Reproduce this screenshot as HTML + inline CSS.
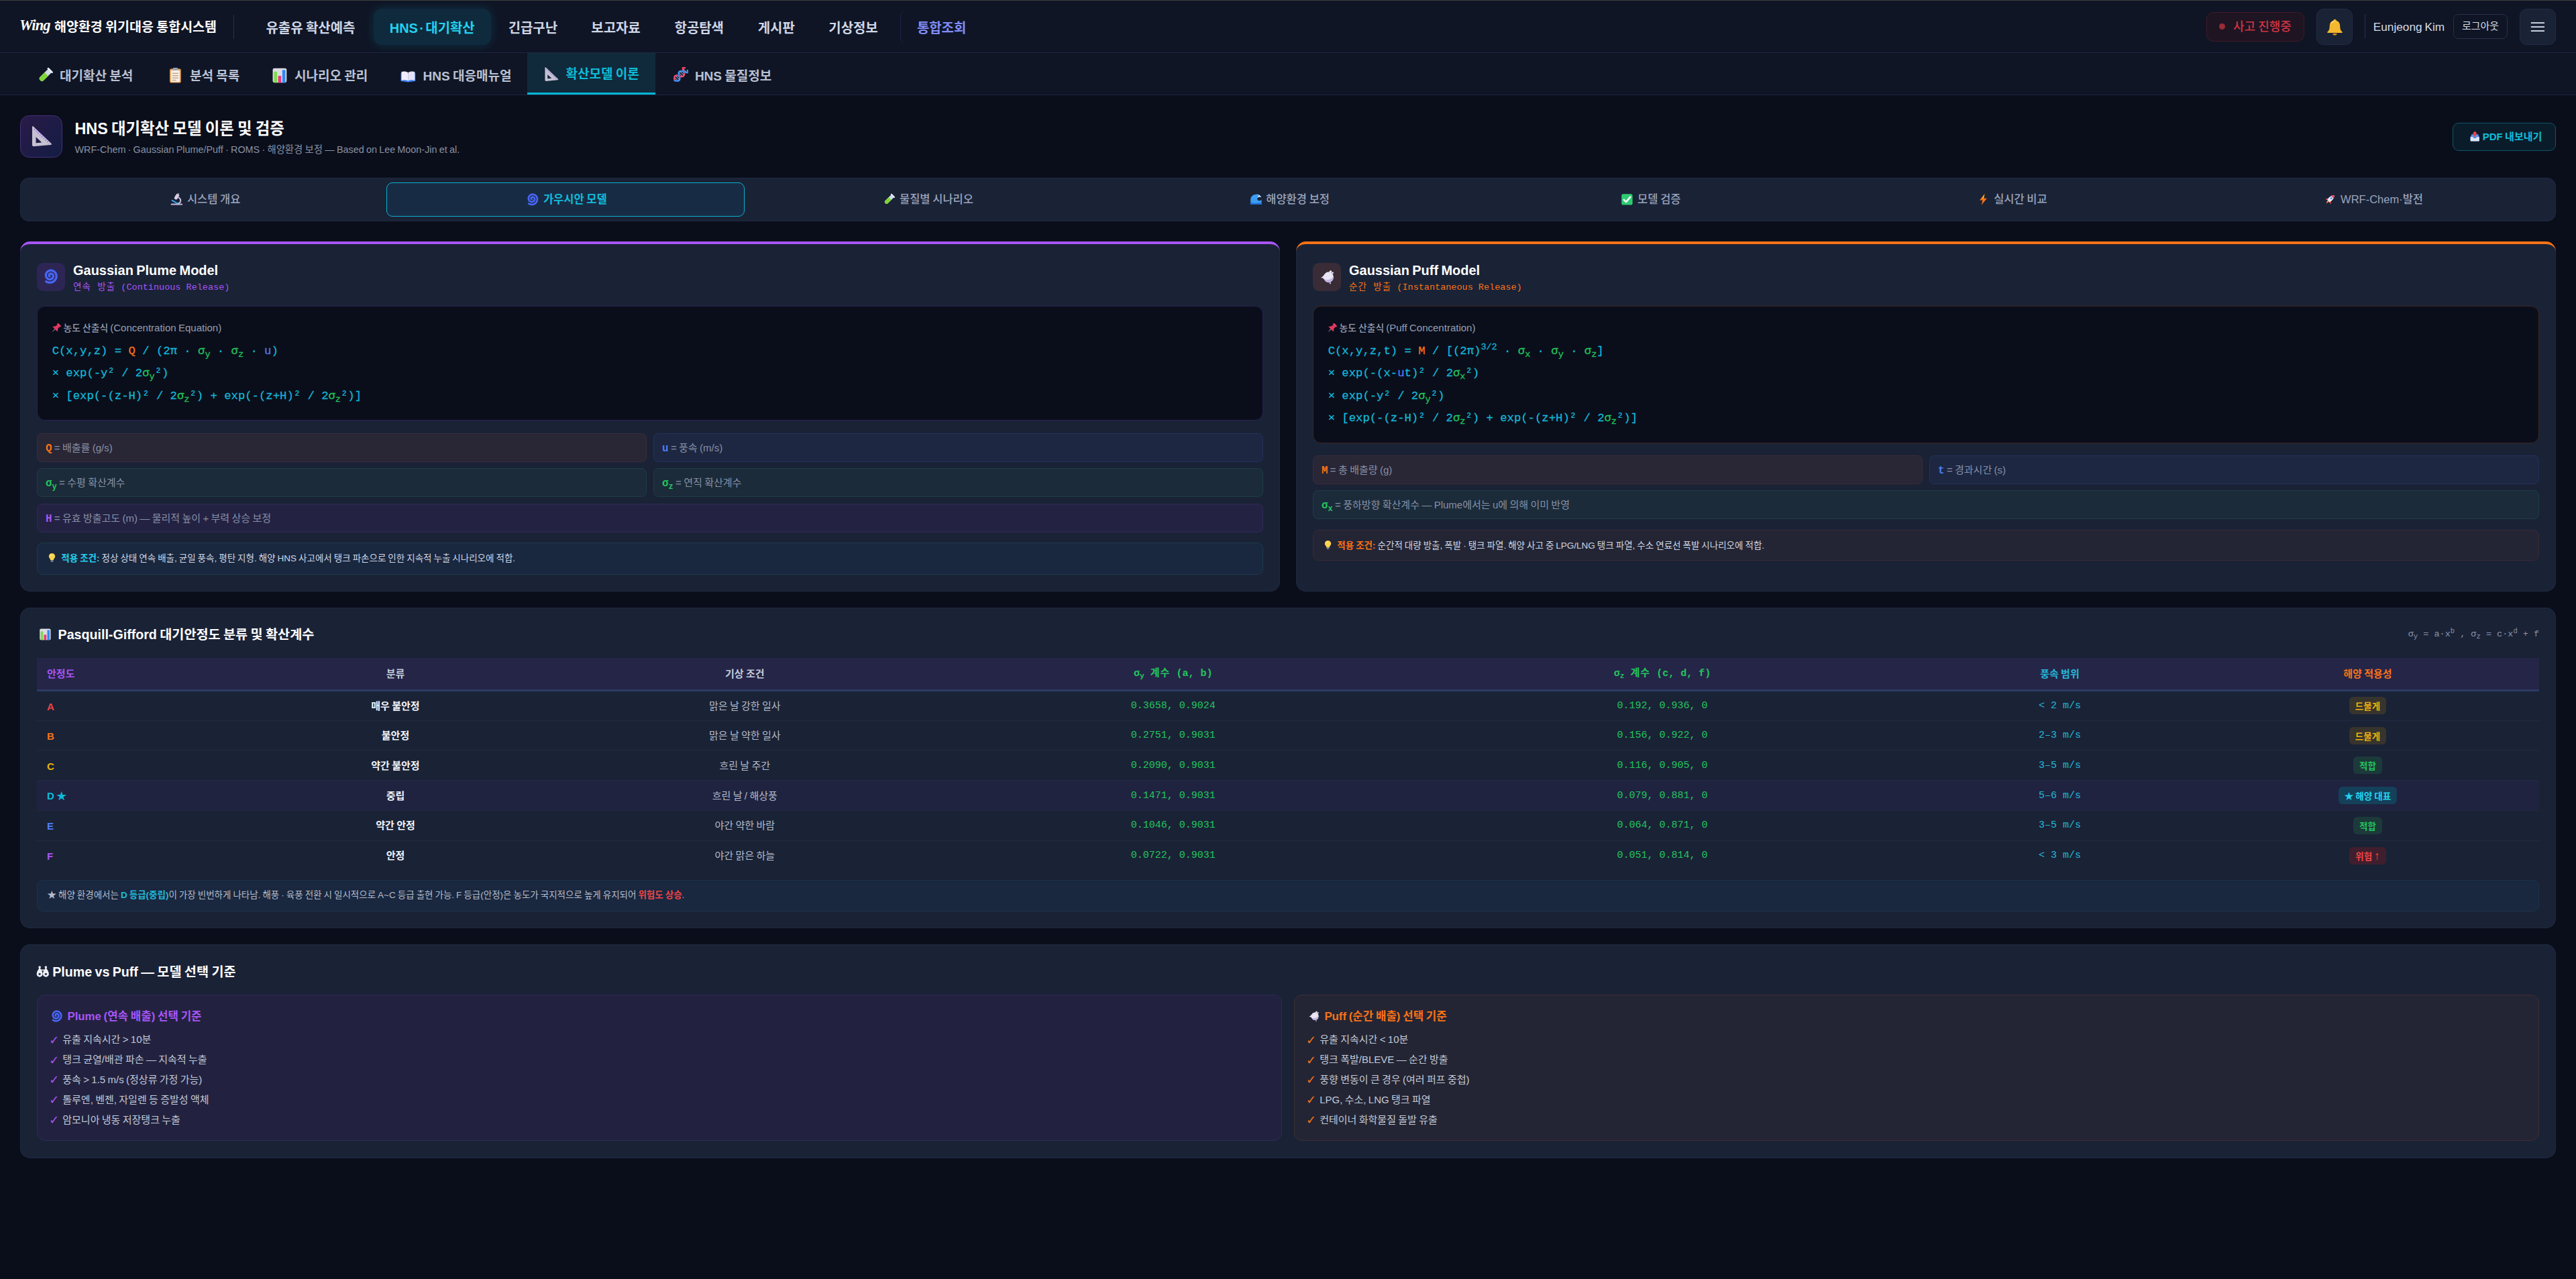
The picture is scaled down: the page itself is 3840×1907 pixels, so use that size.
<!DOCTYPE html>
<html lang="ko">
<head>
<meta charset="utf-8">
<title>HNS 대기확산 모델 이론 및 검증</title>
<style>
*{box-sizing:border-box;margin:0;padding:0}
html{background:#0a0e1a}
body{width:3840px;height:1907px;overflow:hidden;background:#0a0e1a;color:#e5e9f2;
  font-family:"Liberation Sans","Noto Sans CJK KR",sans-serif;font-size:19.5px;line-height:1.4;position:relative}
body *{word-spacing:-0.054em}
.mono,.mono *{font-family:"Liberation Mono","Noto Sans CJK KR",monospace;word-spacing:0}
svg.ic{display:inline-block;vertical-align:middle;flex:none}
.cicon svg.ic,.picon svg.ic,.sqbtn svg.ic{display:block}
.abs{position:absolute;white-space:nowrap}
.kw{letter-spacing:1.08px}
.lat{font-size:15px}
/* ---------- top bar ---------- */
.topbar{position:absolute;left:0;top:0;width:3840px;height:79.005px;background:#0f1525;border-bottom:1.5px solid #1c2741}
.topline{position:absolute;left:0;top:0;width:3840px;height:1.005px;background:#403f3d;z-index:5}
.logo{left:29.1px;top:19.95px;height:36px;line-height:36px;font-family:"Liberation Serif",serif;font-style:italic;font-weight:700;font-size:22.5px;color:#fff;letter-spacing:-0.9px}
.brand{left:81px;top:21px;height:36px;line-height:38.7px;font-size:19.5px;font-weight:700;color:#fff}
.vdiv{position:absolute;width:1.005px;background:#27324d}
.nav{top:13.005px;height:54px;line-height:59.1px;font-size:19.95px;font-weight:700;color:#cfd7e7;text-align:center}
.nav.on{background:#0f2a3d;border-radius:12px;color:#22d3ee;box-shadow:0 0 15px rgba(6,182,212,.18)}
.nav.all{color:#818cf8;font-weight:700;border-left:1.5px solid #1f2649;border-radius:12px}
.pill-alert{left:3289.05px;top:18px;width:145.5px;height:43.5px;border:1.5px solid #421a27;background:#1f1422;border-radius:10.5px;color:#cf3542;font-size:18px;line-height:42px;font-weight:500}
.pill-alert i{position:absolute;left:18px;top:15.75px;width:9px;height:9px;border-radius:50%;background:#9a2c37}
.pill-alert span{position:absolute;left:39px;top:0}
.sqbtn{width:54px;height:54px;top:13.005px;border-radius:10.5px;background:#1a2236;border:1.5px solid #222c45}
.uname{left:3537.75px;top:21.9px;line-height:36px;font-size:17.25px;color:#d5dbe8}
.logout{left:3657px;top:21px;width:81px;height:36.75px;border:1.5px solid #27324d;border-radius:7.5px;font-size:15px;line-height:33.75px;text-align:center;color:#d5dbe8}
/* ---------- sub nav ---------- */
.subnav{position:absolute;left:0;top:79.005px;width:3840px;height:63px;background:#0f1525;border-bottom:1.5px solid #1c2741}
.stab{position:absolute;top:0;height:61.995px;line-height:70.05px;font-size:19.05px;font-weight:700;color:#b9c1d3;white-space:nowrap}
.stab .ic{position:absolute;top:21.3px}
.stab.on{background:#10293b;border-bottom:3px solid #06b6d4;color:#0cbdd8;height:61.995px;line-height:64.05px}
.stab.on .ic{top:19.2px}
/* ---------- page header ---------- */
.picon{left:30px;top:172.05px;width:63px;height:63px;border-radius:13.5px;background:linear-gradient(135deg,#2a1a48,#131d44);border:1.5px solid #46307a}
.ptitle{left:111.45px;top:173.1px;font-size:23.4px;line-height:39px;font-weight:700;color:#fff}
.psub{left:111.45px;top:211.5px;font-size:14.4px;line-height:22.5px;color:#8791a6}
.pdf{left:3655.95px;top:183px;width:154.05px;height:42px;border:1.5px solid #0e5566;background:#0a1c2a;border-radius:9px;color:#10bfdc;font-size:15px;font-weight:700;line-height:39px}
/* ---------- tab bar ---------- */
.tabbar{position:absolute;left:30px;top:265.005px;width:3780px;height:64.995px;background:#1a2236;border-radius:13.5px;box-shadow:inset 0 0 0 1.005px #1e2a43}
.tab{position:absolute;top:7.005px;height:51px;width:534.15px;text-align:center;font-size:16.5px;font-weight:500;line-height:50.1px;padding-left:4.5px;color:#9aa5bc;white-space:nowrap;border-radius:9px}
.tab.on{background:#182b44;border:1.5px solid #0bb0d0;color:#10bcd8;line-height:48px;font-weight:700}
.tab .ic{margin-right:6px;position:relative;top:-1.5px}
/* ---------- cards ---------- */
.card{position:absolute;background:#1a2236;border-radius:15px;box-shadow:inset 1.005px 0 0 #1e2a43,inset -1.005px 0 0 #1e2a43,inset 0 -1.005px 0 #1e2a43}
.card.tbl,.card.cmp{box-shadow:inset 0 0 0 1.005px #1e2a43}
.card.plume{left:30px;top:359.7px;width:1878px;height:522px;border-top:4.5px solid #a855f7}
.card.puff{left:1932px;top:359.7px;width:1878px;height:522px;border-top:4.5px solid #f97316}
.cicon{left:25.2px;top:27.9px;width:42px;height:42px;border-radius:9px}
.ctitle{left:79.05px;top:24.75px;font-size:19.95px;line-height:30px;font-weight:700;color:#fff}
.csub{left:79.05px;top:54px;font-size:13.5px;line-height:21px}
.eq{position:absolute;left:25.05px;top:92.25px;width:1827.9px;background:#0a0e1a;border-radius:12px;padding:20.25px 22.5px 0 21.6px}
.eq .lab{margin-left:-2.4px;font-size:13.8px;line-height:24px;color:#949eb4;font-weight:500;white-space:nowrap;height:30px}
.eq .ln{font-size:17.25px;line-height:33.3px;height:33.3px;color:#12b8dc;white-space:pre;-webkit-text-stroke:0.27px currentColor}
.eq .ln sub{font-size:13.5px;line-height:0;vertical-align:-3.9px}
.eq .ln sup{font-size:13.5px;line-height:0;vertical-align:6.9px}
.o{color:#f97316}.g{color:#22c55e}.b{color:#4f7df5}.p{color:#a855f7}.c{color:#12b8dc}
.var{position:absolute;height:42.9px;border-radius:7.5px;font-size:15px;line-height:42px;padding-left:12px;color:#8791a6;white-space:nowrap;border:1.5px solid}
.var b{font-family:"Liberation Mono",monospace;font-weight:700;font-size:15.75px;word-spacing:0}
.var sub{font-size:12px;line-height:0;vertical-align:-3.6px}
.var.vo{background:#292636;border-color:#3b2d38}
.var.vb{background:#1d2742;border-color:#24325a}
.var.vg{background:#1b2b3a;border-color:#1f3d44}
.var.vp{background:#242243;border-color:#2f2a58}
.cond{position:absolute;left:25.05px;width:1827.9px;height:48px;border-radius:9px;font-size:13.5px;line-height:45px;padding-left:14.25px;color:#cfd6e3;white-space:nowrap;border:1.5px solid}
.cond b{font-weight:700}
.cond .ic{position:relative;top:-1.5px;margin-right:3px}
.cond.cc{background:#19273f;border-color:#1d3a4c}
.cond.co{background:#232534;border-color:#3a2b33}
/* ---------- table card ---------- */
.card.tbl{left:30px;top:906px;width:3780px;height:477.6px}
.card.cmp{left:30px;top:1408.2px;width:3780px;height:318.6px}
.h2{font-size:19.65px;line-height:30px;font-weight:700;color:#fff}
.formula{right:24.9px;top:25.5px;font-size:13.5px;line-height:27px;color:#8a93a7}
.formula sub{font-size:10.5px;line-height:0;vertical-align:-3px}.formula sup{font-size:10.5px;line-height:0;vertical-align:5.1px}
table{position:absolute;left:25.05px;top:75.3px;width:3730.05px;border-collapse:collapse;table-layout:fixed}
th{height:48.3px;background:#252548;font-size:15px;font-weight:700;text-align:center;border-bottom:3px solid #2b3c63;padding:0;white-space:nowrap}
td{height:44.7px;font-size:15px;text-align:center;border-bottom:1.5px solid #212a41;padding:0;white-space:nowrap;color:#b4bccb}
tr:last-child td{border-bottom:none}
th:first-child,td:first-child{text-align:left;padding-left:15px}
td.k{font-weight:700;font-size:15px;padding-top:1.8px}
td.n{font-weight:700;color:#f1f4f9}
td.m{font-family:"Liberation Mono",monospace;font-size:15px;word-spacing:0;color:#22c55e}
td.w{font-family:"Liberation Mono",monospace;font-size:15px;word-spacing:0;color:#22b8d8}
tr.hl td{background:#1f2340}
th sub{font-size:11.25px;line-height:0;vertical-align:-3px}
.badge{display:inline-block;height:26.1px;line-height:30.3px;padding:0 9px;border-radius:6px;font-size:13.5px;font-weight:700;vertical-align:middle}
.bd-y{background:#37342e;color:#efb10d}.bd-g{background:#1c3a3a;color:#22c55e}.bd-c{background:#14405a;color:#22d3ee}.bd-r{background:#3f1f2e;color:#ef4444}
.note{position:absolute;left:25.05px;top:405.6px;width:3730.05px;height:47.4px;border-radius:9px;background:#19273f;border:1.5px solid #1d3448;font-size:13.5px;line-height:44.4px;padding-left:14.4px;color:#b4bccb;white-space:nowrap}
/* ---------- compare card ---------- */
.cbox{position:absolute;top:75.3px;width:1855.95px;height:217.95px;border-radius:12px;border:1.5px solid}
.cbox.l{left:25.05px;background:#222240;border-color:#2d2a57}
.cbox.r{left:1899px;background:#242534;border-color:#3f2e33}
.cbox h3{position:absolute;left:20.4px;top:17.1px;font-size:16.8px;line-height:27px;font-weight:700;white-space:nowrap}
.cbox h3 .ic{margin-right:6px;position:relative;top:-1.5px}
.cbox ul{position:absolute;left:18.6px;top:51px;list-style:none}
.cbox li{height:29.895px;line-height:29.895px;font-size:15px;color:#c3cad8;white-space:nowrap}
.cbox li i{font-style:normal;font-family:"DejaVu Sans",sans-serif;font-size:18px;line-height:15px;display:inline-block;width:18.6px;position:relative;left:-1.5px;top:1.2px}
</style>
</head>
<body>
<div class="topbar"><div class="abs logo">Wing</div><div class="abs brand">해양환경 위기대응 통합시스템</div><div class="vdiv" style="left:348.45px;top:22.005px;height:36px"></div><div class="abs nav " style="left:372.45px;width:181.05px">유출유 확산예측</div><div class="abs nav on" style="left:556.95px;width:174.6px">HNS<span style="margin:0 2.4px">·</span>대기확산</div><div class="abs nav " style="left:733.05px;width:122.55px">긴급구난</div><div class="abs nav " style="left:856.5px;width:123px">보고자료</div><div class="abs nav " style="left:980.55px;width:123.45px">항공탐색</div><div class="abs nav " style="left:1105.05px;width:104.4px">게시판</div><div class="abs nav " style="left:1210.5px;width:123px">기상정보</div><div class="abs nav all" style="left:1341.6px;width:123px">통합조회</div><div class="abs pill-alert"><i></i><span>사고 진행중</span></div><div class="abs sqbtn" style="left:3453px"><div style="position:absolute;left:12.75px;top:13.05px"><svg class="ic" width="27" height="27" viewBox="0 0 16 16"><path d="M8 1 C8.8 1 9.3 1.5 9.3 2.2 C11.6 2.8 12.6 4.8 12.6 7.2 C12.6 10 13.4 11.2 14.6 12.2 V13 H1.4 V12.2 C2.6 11.2 3.4 10 3.4 7.2 C3.4 4.8 4.4 2.8 6.7 2.2 C6.7 1.5 7.2 1 8 1Z" fill="#f5b82e"/><path d="M6.2 13.6 a1.8 1.6 0 0 0 3.6 0Z" fill="#e08a1a"/><path d="M5 4.4 C5.6 3.4 6.6 3 7.4 3" stroke="#fde08a" stroke-width="0.9" fill="none" stroke-linecap="round"/></svg></div></div><div class="vdiv" style="left:3525px;top:21px;height:36px"></div><div class="abs uname">Eunjeong Kim</div><div class="abs logout">로그아웃</div><div class="abs sqbtn" style="left:3756px"><svg width="51" height="51" viewBox="0 0 34 34" style="position:absolute;left:0;top:0"><path d="M10.6 13.4h13.4M10.6 17.4h13.4M10.6 21.4h13.4" stroke="#dfe5f0" stroke-width="1.3"/></svg></div></div><div class="topline"></div>
<div class="subnav"><div class="stab " style="left:31.5px;width:192px"><svg class="ic" width="24.75" height="24.75" viewBox="0 0 16 16" style="left:23.1px"><g transform="rotate(45 8 8)"><rect x="5.6" y="0.8" width="4.8" height="14" rx="2.4" fill="#cfd8e6"/><rect x="5.6" y="6.5" width="4.8" height="8.3" rx="2.4" fill="#7fd43a"/><rect x="5.6" y="6.5" width="4.8" height="2.4" fill="#7fd43a"/><rect x="4.6" y="0.4" width="6.8" height="1.8" rx="0.9" fill="#e8eef7"/></g></svg><span style="position:absolute;left:57.45px">대기확산 분석</span></div><div class="stab " style="left:225.45px;width:156px"><svg class="ic" width="24.75" height="24.75" viewBox="0 0 16 16" style="left:23.1px"><rect x="2.6" y="1.6" width="10.8" height="13.6" rx="1.4" fill="#e8a25c"/><rect x="3.8" y="3.2" width="8.4" height="11" rx="0.6" fill="#f4f1ec"/><rect x="5.6" y="0.6" width="4.8" height="2.6" rx="0.9" fill="#9aa3b5"/><rect x="5" y="5.6" width="6" height="0.9" fill="#c9a27a"/><rect x="5" y="7.8" width="6" height="0.9" fill="#c9a27a"/><rect x="5" y="10" width="6" height="0.9" fill="#c9a27a"/><rect x="5" y="12.2" width="4" height="0.9" fill="#c9a27a"/></svg><span style="position:absolute;left:57.45px">분석 목록</span></div><div class="stab " style="left:381.45px;width:191.55px"><svg class="ic" width="24.75" height="24.75" viewBox="0 0 16 16" style="left:23.1px"><rect x="1" y="1.2" width="13.4" height="13.8" rx="1.6" fill="#dcdbe4"/><rect x="2.2" y="4.4" width="3" height="10.6" rx="0.6" fill="#7ddc4c"/><rect x="6.2" y="8.4" width="3" height="6.6" rx="0.6" fill="#ec3a7a"/><rect x="10.2" y="2.8" width="3" height="12.2" rx="0.6" fill="#2f8af5"/></svg><span style="position:absolute;left:57.45px">시나리오 관리</span></div><div class="stab " style="left:573px;width:213px"><svg class="ic" width="24.75" height="24.75" viewBox="0 0 16 16" style="left:23.1px"><path d="M1 5.6 L8 6.4 L15 5.6 V13.6 L8 14.6 L1 13.6Z" fill="#3b82f6"/><path d="M1.6 4.6 C3.8 4 6.4 4.2 8 5.4 V13.4 C6.4 12.4 3.8 12.2 1.6 12.8Z" fill="#f1ecfa"/><path d="M14.4 4.6 C12.2 4 9.6 4.2 8 5.4 V13.4 C9.6 12.4 12.2 12.2 14.4 12.8Z" fill="#e6e0f3"/></svg><span style="position:absolute;left:57.45px">HNS 대응매뉴얼</span></div><div class="stab on" style="left:786px;width:190.5px"><svg class="ic" width="24.75" height="24.75" viewBox="0 0 16 16" style="left:23.1px"><path d="M2.2 2.2 Q2.2 0.8 3.2 1.8 L14.8 12.8 Q15.6 13.7 14.4 13.8 L3.2 14.8 Q2.2 14.8 2.2 13.8Z" fill="#c6c1d2"/><path d="M4.7 8.6 L4.7 12.5 L8.6 12.2Z" fill="#10293b"/><path d="M3.6 3.4 L13.6 12.9" stroke="#9b6cf0" stroke-width="1.1" stroke-dasharray="0.55 1.15"/></svg><span style="position:absolute;left:57.45px">확산모델 이론</span></div><div class="stab " style="left:978.45px;width:198px"><svg class="ic" width="24.75" height="24.75" viewBox="0 0 16 16" style="left:23.1px"><g transform="translate(1.1 0.6) scale(0.86) rotate(-45 8 8)" fill="none" stroke-linecap="round"><path d="M-1 8 C1.5 3.5 4 3.5 6 8 S11 12.5 13 8 S16 3.5 17 6" stroke="#ef4468" stroke-width="1.9"/><path d="M-1 8 C1.5 12.5 4 12.5 6 8 S11 3.5 13 8 S16 12.5 17 10" stroke="#3b8ef0" stroke-width="1.9"/><path d="M1.4 6.2v3.6M3.4 5.4v5.2M8.4 6v4M10.4 5.4v5.2M14.8 6v4" stroke="#c9d4ea" stroke-width="0.7"/></g></svg><span style="position:absolute;left:57.45px">HNS 물질정보</span></div></div>
<div class="abs picon"><div style="position:absolute;left:12px;top:11.7px"><svg class="ic" width="36" height="36" viewBox="0 0 16 16"><path d="M2.2 2.2 Q2.2 0.8 3.2 1.8 L14.8 12.8 Q15.6 13.7 14.4 13.8 L3.2 14.8 Q2.2 14.8 2.2 13.8Z" fill="#c6c1d2"/><path d="M4.7 8.6 L4.7 12.5 L8.6 12.2Z" fill="#1f1c46"/><path d="M3.6 3.4 L13.6 12.9" stroke="#9b6cf0" stroke-width="1.1" stroke-dasharray="0.55 1.15"/></svg></div></div><div class="abs ptitle">HNS 대기확산 모델 이론 및 검증</div><div class="abs psub">WRF-Chem · Gaussian Plume/Puff · ROMS · 해양환경 보정 — Based on Lee Moon-Jin et al.</div><div class="abs pdf"><span style="position:absolute;left:24px;top:0"><svg class="ic" width="16.5" height="16.5" viewBox="0 0 16 16" style="position:relative;top:-1.5px"><path d="M1.6 9 L3.4 5 H12.6 L14.4 9 V14 A1 1 0 0 1 13.4 15 H2.6 A1 1 0 0 1 1.6 14Z" fill="#5b8def"/><path d="M1.6 9 H5.4 L6.2 10.8 H9.8 L10.6 9 H14.4 V14 A1 1 0 0 1 13.4 15 H2.6 A1 1 0 0 1 1.6 14Z" fill="#dfe7f5"/><path d="M8 0.6 L11.6 4.4 H9.4 V8.6 H6.6 V4.4 H4.4Z" fill="#ef4444"/></svg></span><span style="position:absolute;left:43.8px;top:0">PDF 내보내기</span></div>
<div class="tabbar"><div class="tab " style="left:7.005px"><svg class="ic" width="18.75" height="18.75" viewBox="0 0 16 16"><rect x="0.6" y="13.2" width="14.8" height="2" rx="0.8" fill="#b8a8c8"/><path d="M8.2 13.2 C13.4 13.2 14.6 8.2 10.6 5.6" stroke="#c9c2d4" stroke-width="1.7" fill="none" stroke-linecap="round"/><g transform="rotate(32 8 4.6)"><rect x="5.9" y="0.6" width="4.2" height="6.6" rx="1.6" fill="#d3ccdc"/><rect x="6.2" y="5" width="3.6" height="3.2" rx="1" fill="#e6cdf2"/><rect x="7.2" y="-0.6" width="1.6" height="1.6" fill="#9d97a8"/></g><path d="M2.2 9.2 L8.4 12.8" stroke="#35a8f5" stroke-width="1.7" stroke-linecap="round"/></svg>시스템 개요</div><div class="tab on" style="left:545.655px"><svg class="ic" width="18.75" height="18.75" viewBox="0 0 16 16"><path d="M6.51 7.79 L6.37 7.74 L6.23 7.66 L6.10 7.56 L5.98 7.43 L5.88 7.27 L5.80 7.09 L5.75 6.90 L5.73 6.68 L5.74 6.46 L5.79 6.23 L5.87 6.00 L5.99 5.78 L6.15 5.57 L6.35 5.38 L6.58 5.21 L6.84 5.08 L7.12 4.98 L7.43 4.92 L7.75 4.91 L8.08 4.95 L8.42 5.03 L8.74 5.17 L9.05 5.36 L9.34 5.59 L9.60 5.87 L9.83 6.20 L10.00 6.56 L10.13 6.95 L10.21 7.37 L10.22 7.80 L10.17 8.24 L10.06 8.68 L9.88 9.11 L9.64 9.52 L9.34 9.90 L8.98 10.24 L8.56 10.53 L8.10 10.76 L7.61 10.93 L7.08 11.03 L6.54 11.06 L5.98 11.01 L5.43 10.88 L4.90 10.67 L4.38 10.39 L3.91 10.03 L3.48 9.60 L3.12 9.10 L2.81 8.55 L2.59 7.95 L2.45 7.32 L2.39 6.67 L2.43 6.00 L2.57 5.34 L2.80 4.69 L3.12 4.07 L3.53 3.49 L4.02 2.96 L4.59 2.51 L5.22 2.13 L5.91 1.84 L6.65 1.65 L7.41 1.56 L8.19 1.57 L8.97 1.70 L9.74 1.93 L10.47 2.28 L11.16 2.72 L11.79 3.27 L12.34 3.91 L12.81 4.62 L13.17 5.40 L13.43 6.23 L13.57 7.11 L13.59 8.00 L13.48 8.89 L13.25 9.78 L12.90 10.63 L12.42 11.43 L11.83 12.17 L11.14 12.83 L10.36 13.39 L9.49 13.84 L8.57 14.18 L7.59 14.38 L6.59 14.44 L5.58 14.37 L4.57 14.16 L3.60 13.80 L2.67 13.31" stroke="#4866f6" stroke-width="2.3" fill="none" stroke-linecap="round" stroke-linejoin="round"/></svg>가우시안 모델</div><div class="tab " style="left:1084.305px"><svg class="ic" width="18.75" height="18.75" viewBox="0 0 16 16"><g transform="rotate(45 8 8)"><rect x="5.6" y="0.8" width="4.8" height="14" rx="2.4" fill="#cfd8e6"/><rect x="5.6" y="6.5" width="4.8" height="8.3" rx="2.4" fill="#7fd43a"/><rect x="5.6" y="6.5" width="4.8" height="2.4" fill="#7fd43a"/><rect x="4.6" y="0.4" width="6.8" height="1.8" rx="0.9" fill="#e8eef7"/></g></svg>물질별 시나리오</div><div class="tab " style="left:1622.955px"><svg class="ic" width="18.75" height="18.75" viewBox="0 0 16 16"><path d="M1 14.6 V8.2 C1 4 4.4 1.4 8.4 1.4 C11.6 1.4 13.8 3 14.6 5.2 C13 4.2 10.6 4.4 9.8 6.2 C9 8.2 10.6 10 12.6 9.6 C13.6 9.4 14.4 8.8 15 8 V14.6Z" fill="#3b9cf2"/><path d="M8.4 1.4 C11.6 1.4 13.8 3 14.6 5.2 C13 4.2 10.6 4.4 9.8 6.2 C10 4 11.4 3.2 12.4 3 C11.2 2.2 9.8 1.6 8.4 1.4Z" fill="#e6f2ff"/><path d="M1 12.4 C4 11.4 6 13.6 9 12.6 C11.4 11.8 13 12.8 15 12.2 V14.6 H1Z" fill="#1f6fd6"/></svg>해양환경 보정</div><div class="tab " style="left:2161.605px"><svg class="ic" width="18.75" height="18.75" viewBox="0 0 16 16"><rect x="1" y="1" width="14" height="14" rx="2.2" fill="#2ecc71"/><path d="M4 8.4 L6.8 11.2 L12.2 4.8" stroke="#fff" stroke-width="2" fill="none" stroke-linecap="round" stroke-linejoin="round"/></svg>모델 검증</div><div class="tab " style="left:2700.255px"><svg class="ic" width="18.75" height="18.75" viewBox="0 0 16 16"><path d="M9.8 0.8 L3.4 9 H7.2 L5.8 15.2 L12.6 6.6 H8.6Z" fill="#f97316"/><path d="M9.8 0.8 L6.4 6.8 L8.6 6.6Z" fill="#fbbf24"/></svg>실시간 비교</div><div class="tab " style="left:3238.905px"><svg class="ic" width="18.75" height="18.75" viewBox="0 0 16 16"><g transform="rotate(45 8 8)"><path d="M8 0.4 C10.6 2.6 11 6.6 10.4 11 H5.6 C5 6.6 5.4 2.6 8 0.4Z" fill="#e8ecf5"/><path d="M8 0.4 C9.2 1.4 9.9 2.6 10.3 4 H5.7 C6.1 2.6 6.8 1.4 8 0.4Z" fill="#ef4468"/><circle cx="8" cy="6" r="1.3" fill="#4f8ef7"/><path d="M5.6 8 L3.2 12 L5.7 11.2Z M10.4 8 L12.8 12 L10.3 11.2Z" fill="#ef4468"/><path d="M6.6 11 H9.4 L8 15.2Z" fill="#fb923c"/></g></svg>WRF-Chem·발전</div></div>
<div class="card plume"><div class="abs cicon" style="background:#2d2655"><div style="position:absolute;left:9.75px;top:9.75px"><svg class="ic" width="22.5" height="22.5" viewBox="0 0 16 16"><path d="M6.51 7.79 L6.37 7.74 L6.23 7.66 L6.10 7.56 L5.98 7.43 L5.88 7.27 L5.80 7.09 L5.75 6.90 L5.73 6.68 L5.74 6.46 L5.79 6.23 L5.87 6.00 L5.99 5.78 L6.15 5.57 L6.35 5.38 L6.58 5.21 L6.84 5.08 L7.12 4.98 L7.43 4.92 L7.75 4.91 L8.08 4.95 L8.42 5.03 L8.74 5.17 L9.05 5.36 L9.34 5.59 L9.60 5.87 L9.83 6.20 L10.00 6.56 L10.13 6.95 L10.21 7.37 L10.22 7.80 L10.17 8.24 L10.06 8.68 L9.88 9.11 L9.64 9.52 L9.34 9.90 L8.98 10.24 L8.56 10.53 L8.10 10.76 L7.61 10.93 L7.08 11.03 L6.54 11.06 L5.98 11.01 L5.43 10.88 L4.90 10.67 L4.38 10.39 L3.91 10.03 L3.48 9.60 L3.12 9.10 L2.81 8.55 L2.59 7.95 L2.45 7.32 L2.39 6.67 L2.43 6.00 L2.57 5.34 L2.80 4.69 L3.12 4.07 L3.53 3.49 L4.02 2.96 L4.59 2.51 L5.22 2.13 L5.91 1.84 L6.65 1.65 L7.41 1.56 L8.19 1.57 L8.97 1.70 L9.74 1.93 L10.47 2.28 L11.16 2.72 L11.79 3.27 L12.34 3.91 L12.81 4.62 L13.17 5.40 L13.43 6.23 L13.57 7.11 L13.59 8.00 L13.48 8.89 L13.25 9.78 L12.90 10.63 L12.42 11.43 L11.83 12.17 L11.14 12.83 L10.36 13.39 L9.49 13.84 L8.57 14.18 L7.59 14.38 L6.59 14.44 L5.58 14.37 L4.57 14.16 L3.60 13.80 L2.67 13.31" stroke="#4866f6" stroke-width="2.3" fill="none" stroke-linecap="round" stroke-linejoin="round"/></svg></div></div><div class="abs ctitle">Gaussian Plume Model</div><div class="abs csub mono p"><span class="kw">연속 방출</span> (Continuous Release)</div><div class="eq" style="height:171.3px;border:1.5px solid #2a2050"><div class="lab"><svg class="ic" width="15.75" height="15.75" viewBox="0 0 16 16" style="position:relative;top:-0.75px;margin-right:3.6px"><g transform="rotate(45 8 8)"><rect x="4.6" y="-0.6" width="6.8" height="2.6" rx="1.2" fill="#f43f6e"/><path d="M5.8 2 H10.2 L10.8 6.4 C12.4 7 13 8.2 13 9.4 H3 C3 8.2 3.6 7 5.2 6.4Z" fill="#e8355f"/><path d="M7.4 9.4 H8.6 L8 16.4Z" fill="#aeb6c6"/></g></svg>농도 산출식 <span class="lat">(Concentration Equation)</span></div><div class="ln mono">C(x,y,z) = <span class="o">Q</span> / (2π · <span class="g">σ<sub>y</sub></span> · <span class="g">σ<sub>z</sub></span> · <span class="b">u</span>)</div><div class="ln mono">× exp(-y² / 2<span class="g">σ<sub>y</sub></span>²)</div><div class="ln mono">× [exp(-(z-H)² / 2<span class="g">σ<sub>z</sub></span>²) + exp(-(z+H)² / 2<span class="g">σ<sub>z</sub></span>²)]</div></div><div class="var vo" style="left:25.05px;top:282px;width:909.45px"><b class="o">Q</b> = 배출률 (g/s)</div><div class="var vb" style="left:944.1px;top:282px;width:909px"><b class="b">u</b> = 풍속 (m/s)</div><div class="var vg" style="left:25.05px;top:334.5px;width:909.45px"><b class="g">σ<sub>y</sub></b> = 수평 확산계수</div><div class="var vg" style="left:944.1px;top:334.5px;width:909px"><b class="g">σ<sub>z</sub></b> = 연직 확산계수</div><div class="var vp" style="left:25.05px;top:387px;width:1828.05px"><b class="p">H</b> = 유효 방출고도 (m) — 물리적 높이 + 부력 상승 보정</div><div class="cond cc" style="top:444.9px"><svg class="ic" width="15" height="15" viewBox="0 0 16 16"><path d="M8 1 C11 1 13 3.2 13 5.8 C13 7.8 11.8 8.8 11 10 C10.6 10.6 10.6 11.2 10.6 11.6 H5.4 C5.4 11.2 5.4 10.6 5 10 C4.2 8.8 3 7.8 3 5.8 C3 3.2 5 1 8 1Z" fill="#fbd34d"/><rect x="5.6" y="12" width="4.8" height="1.4" rx="0.5" fill="#9aa3b5"/><rect x="6.2" y="13.7" width="3.6" height="1.3" rx="0.6" fill="#7d8698"/><path d="M6 4.4 C6.4 3.4 7.2 2.8 8 2.8" stroke="#fff3c4" stroke-width="0.9" fill="none" stroke-linecap="round"/></svg> <b style="color:#22d3ee">적용 조건:</b> 정상 상태 연속 배출, 균일 풍속, 평탄 지형. 해양 HNS 사고에서 탱크 파손으로 인한 지속적 누출 시나리오에 적합.</div></div>
<div class="card puff"><div class="abs cicon" style="background:#3a2c36"><div style="position:absolute;left:9.45px;top:9px"><svg class="ic" width="24" height="24" viewBox="0 0 16 16"><path d="M1.2 8.6 C3.8 8 4.4 5.4 6.2 4 C9 1.9 13.4 3.4 13.8 7.4 C14.2 11.2 11.6 13.8 8.4 13.4 C6 13.1 5.2 11 4.2 9.8 C3.4 9 2.4 8.8 1.2 8.6Z" fill="#e9e5f4"/><path d="M13.8 7.4 C14.2 11.2 11.6 13.8 8.4 13.4 C6 13.1 5.2 11 4.2 9.8 C6.4 11.6 11.6 11.4 13.8 7.4Z" fill="#bfb4e2"/><circle cx="11" cy="2.7" r="1.15" fill="#f3f0fa"/><circle cx="13" cy="3.9" r="0.95" fill="#f3f0fa"/><circle cx="10.6" cy="14.2" r="0.75" fill="#d9d2ee"/></svg></div></div><div class="abs ctitle">Gaussian Puff Model</div><div class="abs csub mono o"><span class="kw">순간 방출</span> (Instantaneous Release)</div><div class="eq" style="height:205.5px;border:1.5px solid #3d2622"><div class="lab"><svg class="ic" width="15.75" height="15.75" viewBox="0 0 16 16" style="position:relative;top:-0.75px;margin-right:3.6px"><g transform="rotate(45 8 8)"><rect x="4.6" y="-0.6" width="6.8" height="2.6" rx="1.2" fill="#f43f6e"/><path d="M5.8 2 H10.2 L10.8 6.4 C12.4 7 13 8.2 13 9.4 H3 C3 8.2 3.6 7 5.2 6.4Z" fill="#e8355f"/><path d="M7.4 9.4 H8.6 L8 16.4Z" fill="#aeb6c6"/></g></svg>농도 산출식 <span class="lat">(Puff Concentration)</span></div><div class="ln mono">C(x,y,z,t) = <span class="o">M</span> / [(2π)<sup>3/2</sup> · <span class="g">σ<sub>x</sub></span> · <span class="g">σ<sub>y</sub></span> · <span class="g">σ<sub>z</sub></span>]</div><div class="ln mono">× exp(-(x-<span class="b">u</span>t)² / 2<span class="g">σ<sub>x</sub></span>²)</div><div class="ln mono">× exp(-y² / 2<span class="g">σ<sub>y</sub></span>²)</div><div class="ln mono">× [exp(-(z-H)² / 2<span class="g">σ<sub>z</sub></span>²) + exp(-(z+H)² / 2<span class="g">σ<sub>z</sub></span>²)]</div></div><div class="var vo" style="left:25.05px;top:315.3px;width:909.45px"><b class="o">M</b> = 총 배출량 (g)</div><div class="var vb" style="left:944.1px;top:315.3px;width:909px"><b class="b">t</b> = 경과시간 (s)</div><div class="var vg" style="left:25.05px;top:367.5px;width:1828.05px"><b class="g">σ<sub>x</sub></b> = 풍하방향 확산계수 — Plume에서는 u에 의해 이미 반영</div><div class="cond co" style="top:426px;height:46.5px"><svg class="ic" width="15" height="15" viewBox="0 0 16 16"><path d="M8 1 C11 1 13 3.2 13 5.8 C13 7.8 11.8 8.8 11 10 C10.6 10.6 10.6 11.2 10.6 11.6 H5.4 C5.4 11.2 5.4 10.6 5 10 C4.2 8.8 3 7.8 3 5.8 C3 3.2 5 1 8 1Z" fill="#fbd34d"/><rect x="5.6" y="12" width="4.8" height="1.4" rx="0.5" fill="#9aa3b5"/><rect x="6.2" y="13.7" width="3.6" height="1.3" rx="0.6" fill="#7d8698"/><path d="M6 4.4 C6.4 3.4 7.2 2.8 8 2.8" stroke="#fff3c4" stroke-width="0.9" fill="none" stroke-linecap="round"/></svg> <b style="color:#f97316">적용 조건:</b> 순간적 대량 방출, 폭발 · 탱크 파열. 해양 사고 중 LPG/LNG 탱크 파열, 수소 연료선 폭발 시나리오에 적합.</div></div>
<div class="card tbl"><div class="abs h2" style="left:28.05px;top:24.9px"><svg class="ic" width="19.5" height="19.5" viewBox="0 0 16 16" style="position:relative;top:-2.25px;margin-right:9px"><rect x="1" y="1.2" width="13.4" height="13.8" rx="1.6" fill="#dcdbe4"/><rect x="2.2" y="4.4" width="3" height="10.6" rx="0.6" fill="#7ddc4c"/><rect x="6.2" y="8.4" width="3" height="6.6" rx="0.6" fill="#ec3a7a"/><rect x="10.2" y="2.8" width="3" height="12.2" rx="0.6" fill="#2f8af5"/></svg>Pasquill-Gifford 대기안정도 분류 및 확산계수</div><div class="abs formula mono">σ<sub>y</sub> = a·x<sup>b</sup> , σ<sub>z</sub> = c·x<sup>d</sup> + f</div><table><colgroup><col style="width:311.85px"><col style="width:445.2px"><col style="width:596.4px"><col style="width:680.4px"><col style="width:778.2px"><col style="width:406.8px"><col style="width:511.2px"></colgroup><tr><th style="color:#a855f7">안정도</th><th style="color:#c3cad8">분류</th><th style="color:#c3cad8">기상 조건</th><th class="mono" style="color:#22c55e">σ<sub>y</sub> <span class="kw">계수</span> (a, b)</th><th class="mono" style="color:#22c55e">σ<sub>z</sub> <span class="kw">계수</span> (c, d, f)</th><th style="color:#22b8d8">풍속 범위</th><th style="color:#f97316">해양 적용성</th></tr><tr class=""><td class="k" style="color:#ef4444">A</td><td class="n">매우 불안정</td><td>맑은 날 강한 일사</td><td class="m">0.3658, 0.9024</td><td class="m">0.192, 0.936, 0</td><td class="w">&lt; 2 m/s</td><td><span class="badge bd-y">드물게</span></td></tr><tr class=""><td class="k" style="color:#f97316">B</td><td class="n">불안정</td><td>맑은 날 약한 일사</td><td class="m">0.2751, 0.9031</td><td class="m">0.156, 0.922, 0</td><td class="w">2–3 m/s</td><td><span class="badge bd-y">드물게</span></td></tr><tr class=""><td class="k" style="color:#eab308">C</td><td class="n">약간 불안정</td><td>흐린 날 주간</td><td class="m">0.2090, 0.9031</td><td class="m">0.116, 0.905, 0</td><td class="w">3–5 m/s</td><td><span class="badge bd-g">적합</span></td></tr><tr class="hl"><td class="k" style="color:#0cbad8">D ★</td><td class="n">중립</td><td>흐린 날 / 해상풍</td><td class="m">0.1471, 0.9031</td><td class="m">0.079, 0.881, 0</td><td class="w">5–6 m/s</td><td><span class="badge bd-c">★ 해양 대표</span></td></tr><tr class=""><td class="k" style="color:#4f7df5">E</td><td class="n">약간 안정</td><td>야간 약한 바람</td><td class="m">0.1046, 0.9031</td><td class="m">0.064, 0.871, 0</td><td class="w">3–5 m/s</td><td><span class="badge bd-g">적합</span></td></tr><tr class=""><td class="k" style="color:#a855f7">F</td><td class="n">안정</td><td>야간 맑은 하늘</td><td class="m">0.0722, 0.9031</td><td class="m">0.051, 0.814, 0</td><td class="w">&lt; 3 m/s</td><td><span class="badge bd-r">위험 <span style="font-size:17.25px;line-height:0">↑</span></span></td></tr></table><div class="note">★ 해양 환경에서는 <b style="color:#22b8d8">D 등급(중립)</b>이 가장 빈번하게 나타남. 해풍 · 육풍 전환 시 일시적으로 A~C 등급 출현 가능. F 등급(안정)은 농도가 국지적으로 높게 유지되어 <b style="color:#ef4444">위험도 상승</b>.</div></div>
<div class="card cmp"><div class="abs h2" style="left:24.45px;top:25.5px"><svg class="ic" width="19.5" height="19.5" viewBox="0 0 16 16" style="position:relative;top:-2.25px;margin-right:4.2px"><path d="M4.2 2.6 C2.8 5.2 0.5 7.8 0.5 10.8 A3.7 3.7 0 0 0 7.9 10.8 C7.9 7.8 5.6 5.2 4.2 2.6Z M11.8 2.6 C10.4 5.2 8.1 7.8 8.1 10.8 A3.7 3.7 0 0 0 15.5 10.8 C15.5 7.8 13.2 5.2 11.8 2.6Z" fill="#eef0f6"/><rect x="2.9" y="1.2" width="2.6" height="2.6" rx="0.7" fill="#eef0f6"/><rect x="10.5" y="1.2" width="2.6" height="2.6" rx="0.7" fill="#eef0f6"/><rect x="5.6" y="5.4" width="4.8" height="1.3" fill="#eef0f6"/><circle cx="4.2" cy="10.9" r="1.35" fill="#2a3146"/><circle cx="11.8" cy="10.9" r="1.35" fill="#2a3146"/></svg>Plume vs Puff — 모델 선택 기준</div><div class="cbox l"><h3 style="color:#a855f7"><svg class="ic" width="18" height="18" viewBox="0 0 16 16"><path d="M6.51 7.79 L6.37 7.74 L6.23 7.66 L6.10 7.56 L5.98 7.43 L5.88 7.27 L5.80 7.09 L5.75 6.90 L5.73 6.68 L5.74 6.46 L5.79 6.23 L5.87 6.00 L5.99 5.78 L6.15 5.57 L6.35 5.38 L6.58 5.21 L6.84 5.08 L7.12 4.98 L7.43 4.92 L7.75 4.91 L8.08 4.95 L8.42 5.03 L8.74 5.17 L9.05 5.36 L9.34 5.59 L9.60 5.87 L9.83 6.20 L10.00 6.56 L10.13 6.95 L10.21 7.37 L10.22 7.80 L10.17 8.24 L10.06 8.68 L9.88 9.11 L9.64 9.52 L9.34 9.90 L8.98 10.24 L8.56 10.53 L8.10 10.76 L7.61 10.93 L7.08 11.03 L6.54 11.06 L5.98 11.01 L5.43 10.88 L4.90 10.67 L4.38 10.39 L3.91 10.03 L3.48 9.60 L3.12 9.10 L2.81 8.55 L2.59 7.95 L2.45 7.32 L2.39 6.67 L2.43 6.00 L2.57 5.34 L2.80 4.69 L3.12 4.07 L3.53 3.49 L4.02 2.96 L4.59 2.51 L5.22 2.13 L5.91 1.84 L6.65 1.65 L7.41 1.56 L8.19 1.57 L8.97 1.70 L9.74 1.93 L10.47 2.28 L11.16 2.72 L11.79 3.27 L12.34 3.91 L12.81 4.62 L13.17 5.40 L13.43 6.23 L13.57 7.11 L13.59 8.00 L13.48 8.89 L13.25 9.78 L12.90 10.63 L12.42 11.43 L11.83 12.17 L11.14 12.83 L10.36 13.39 L9.49 13.84 L8.57 14.18 L7.59 14.38 L6.59 14.44 L5.58 14.37 L4.57 14.16 L3.60 13.80 L2.67 13.31" stroke="#4866f6" stroke-width="2.3" fill="none" stroke-linecap="round" stroke-linejoin="round"/></svg>Plume (연속 배출) 선택 기준</h3><ul><li><i style="color:#a855f7">✓</i>유출 지속시간 &gt; 10분</li><li><i style="color:#a855f7">✓</i>탱크 균열/배관 파손 — 지속적 누출</li><li><i style="color:#a855f7">✓</i>풍속 &gt; 1.5 m/s (정상류 가정 가능)</li><li><i style="color:#a855f7">✓</i>톨루엔, 벤젠, 자일렌 등 증발성 액체</li><li><i style="color:#a855f7">✓</i>암모니아 냉동 저장탱크 누출</li></ul></div><div class="cbox r"><h3 style="color:#f97316"><svg class="ic" width="18" height="18" viewBox="0 0 16 16"><path d="M1.2 8.6 C3.8 8 4.4 5.4 6.2 4 C9 1.9 13.4 3.4 13.8 7.4 C14.2 11.2 11.6 13.8 8.4 13.4 C6 13.1 5.2 11 4.2 9.8 C3.4 9 2.4 8.8 1.2 8.6Z" fill="#e9e5f4"/><path d="M13.8 7.4 C14.2 11.2 11.6 13.8 8.4 13.4 C6 13.1 5.2 11 4.2 9.8 C6.4 11.6 11.6 11.4 13.8 7.4Z" fill="#bfb4e2"/><circle cx="11" cy="2.7" r="1.15" fill="#f3f0fa"/><circle cx="13" cy="3.9" r="0.95" fill="#f3f0fa"/><circle cx="10.6" cy="14.2" r="0.75" fill="#d9d2ee"/></svg>Puff (순간 배출) 선택 기준</h3><ul><li><i style="color:#f97316">✓</i>유출 지속시간 &lt; 10분</li><li><i style="color:#f97316">✓</i>탱크 폭발/BLEVE — 순간 방출</li><li><i style="color:#f97316">✓</i>풍향 변동이 큰 경우 (여러 퍼프 중첩)</li><li><i style="color:#f97316">✓</i>LPG, 수소, LNG 탱크 파열</li><li><i style="color:#f97316">✓</i>컨테이너 화학물질 돌발 유출</li></ul></div></div>
</body>
</html>
